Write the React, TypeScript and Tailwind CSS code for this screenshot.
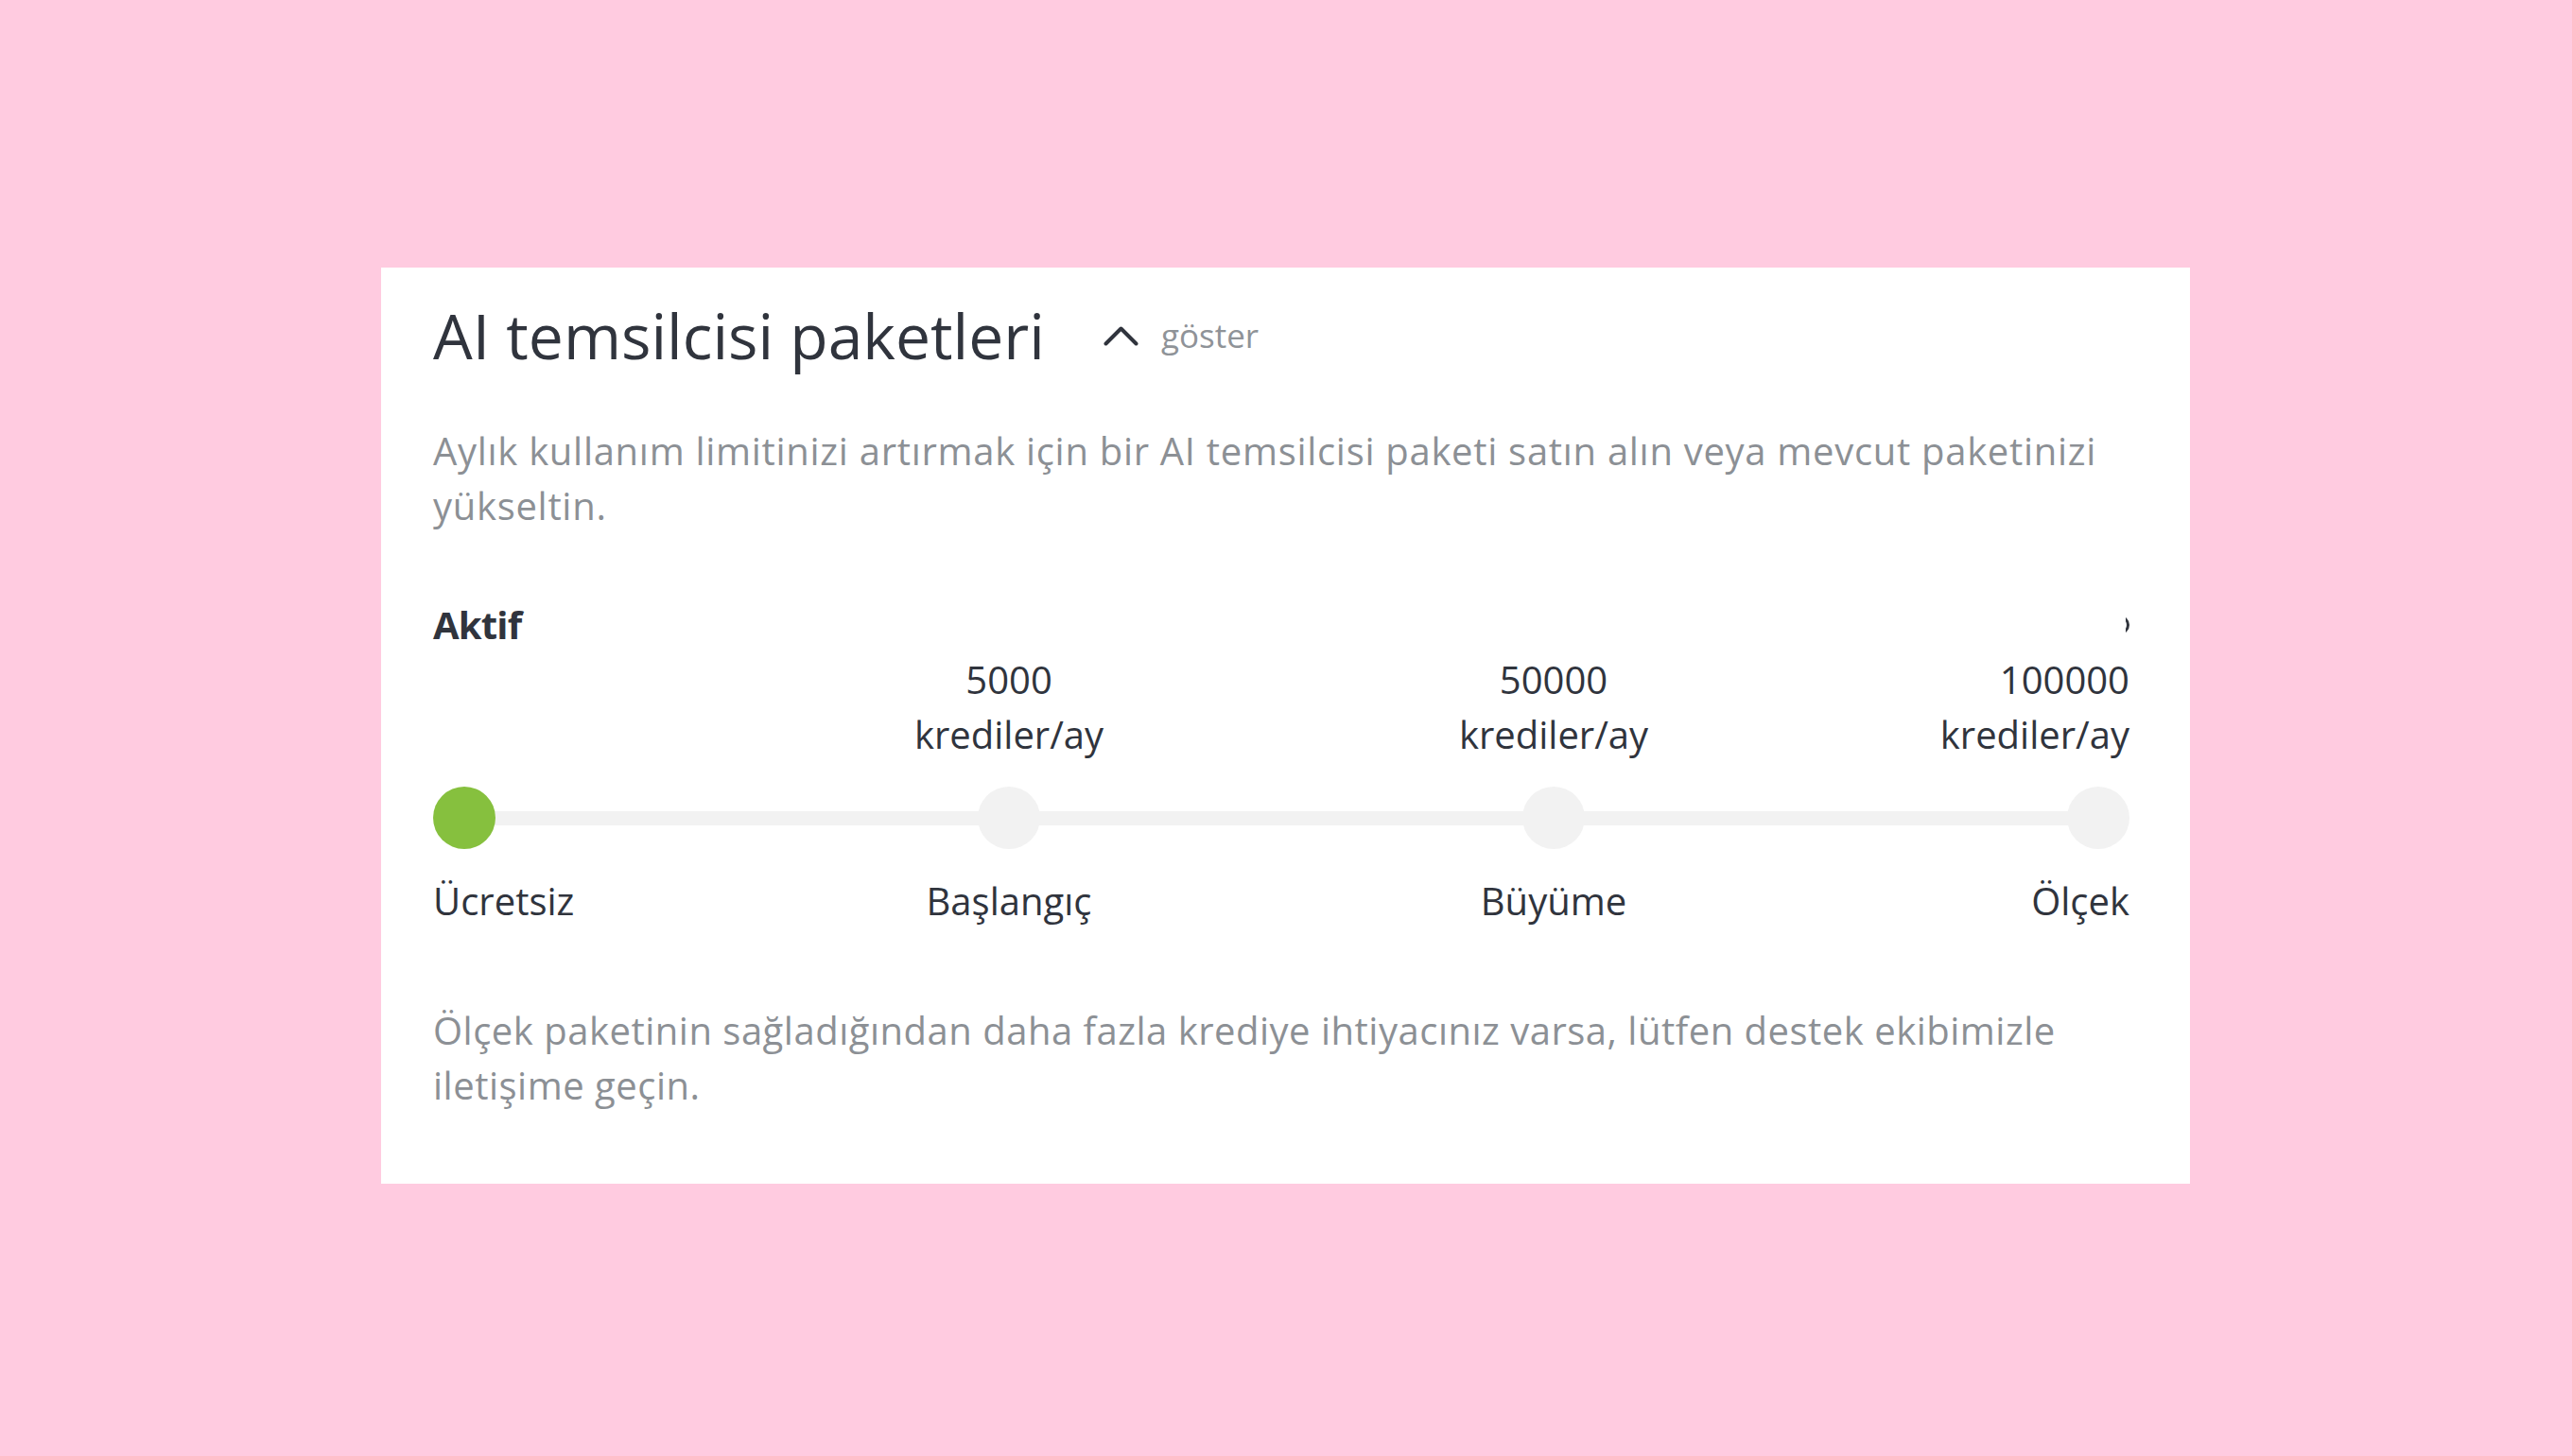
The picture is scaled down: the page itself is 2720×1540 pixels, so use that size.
import React from "react";

const steps = [
  { name: "Ücretsiz", credits: null as string | null, active: true },
  { name: "Başlangıç", credits: "5000", active: false },
  { name: "Büyüme", credits: "50000", active: false },
  { name: "Ölçek", credits: "100000", active: false },
];

function align(i: number) {
  if (i === 0) return "justify-start text-left";
  if (i === steps.length - 1) return "justify-end text-right";
  return "justify-center text-center";
}

export default function App() {
  return (
    <div
      className="min-h-screen w-full bg-[#ffcbe0] pt-[283px] pl-[403px]"
      style={{ fontFamily: "'Open Sans', 'Noto Sans', sans-serif" }}
    >
      <div className="w-[1913px] bg-white pl-[55px] pr-[64px] pt-[32px] pb-[75px]">
        {/* Başlık */}
        <div className="flex items-center">
          <h1 className="text-[66px] leading-[1.2] text-[#30343d] font-normal">
            AI temsilcisi paketleri
          </h1>
          <button className="ml-[62px] flex items-center gap-[24px]">
            <svg width="37" height="22" viewBox="0 0 37 22" fill="none" aria-hidden="true">
              <path d="M2.5 19.5 L18.5 3.5 L34.5 19.5" stroke="#30343d" strokeWidth="4" strokeLinecap="round" strokeLinejoin="round" />
            </svg>
            <span className="text-[35px] leading-[1.2] text-[#8f9398]">göster</span>
          </button>
        </div>

        <p className="mt-[54px] text-[40px] leading-[58px] text-[#8c9095] tracking-[0.7px]">
          Aylık kullanım limitinizi artırmak için bir AI temsilcisi paketi satın alın veya mevcut paketinizi yükseltin.
        </p>

        {/* Aktif */}
        <div className="mt-[68px] flex items-center justify-between">
          <span className="text-[40px] leading-[58px] font-bold text-[#30343d] tracking-[-0.8px]">Aktif</span>
          <div className="w-[4px] h-[20px] overflow-hidden">
            <div className="w-[20px] h-[20px] -ml-[16px] rounded-full border-[3px] border-[#30343d]" />
          </div>
        </div>

        {/* Kredi etiketleri */}
        <div className="flex justify-between text-[40px] leading-[58px] text-[#30343d]">
          {steps.map((s, i) => (
            <div key={s.name} className={`w-[66px] flex ${align(i)}`}>
              {s.credits ? (
                <div className="whitespace-nowrap">
                  <div>{s.credits}</div>
                  <div>krediler/ay</div>
                </div>
              ) : (
                <div className="h-[116px]" />
              )}
            </div>
          ))}
        </div>

        {/* Kaydırıcı */}
        <div className="relative mt-[26px] h-[66px]">
          <div className="absolute left-[33px] right-[33px] top-[26px] h-[15px] bg-[#f2f2f2]" />
          <div className="relative flex h-full justify-between">
            {steps.map((s) => (
              <div
                key={s.name}
                className={`w-[66px] h-[66px] rounded-full ${s.active ? "bg-[#86c03e]" : "bg-[#f2f2f2]"}`}
              />
            ))}
          </div>
        </div>

        {/* Paket adları */}
        <div className="mt-[26px] flex justify-between text-[40px] leading-[58px] text-[#30343d]">
          {steps.map((s, i) => (
            <div key={s.name} className={`w-[66px] flex ${align(i)}`}>
              <span className="whitespace-nowrap">{s.name}</span>
            </div>
          ))}
        </div>

        <p className="mt-[79px] text-[40px] leading-[58px] text-[#8c9095] tracking-[0.5px]">
          Ölçek paketinin sağladığından daha fazla krediye ihtiyacınız varsa, lütfen destek ekibimizle iletişime geçin.
        </p>
      </div>
    </div>
  );
}
